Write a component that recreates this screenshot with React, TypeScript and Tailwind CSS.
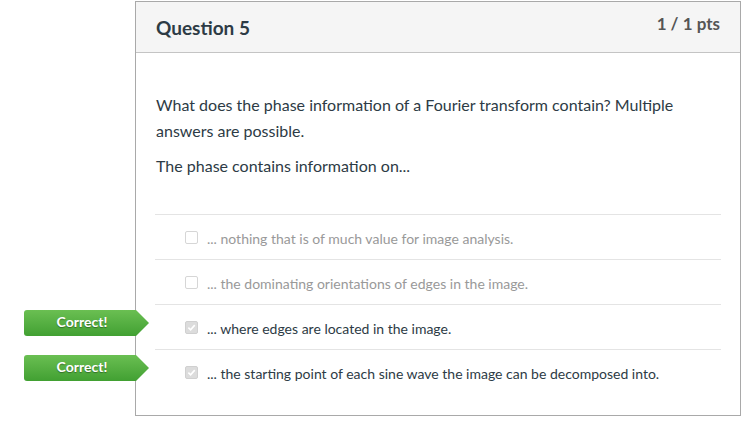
import React from "react";

const answers = [
  { text: "... nothing that is of much value for image analysis.", checked: false },
  { text: "... the dominating orientations of edges in the image.", checked: false },
  { text: "... where edges are located in the image.", checked: true },
  { text: "... the starting point of each sine wave the image can be decomposed into.", checked: true },
];

function Badge() {
  return (
    <div className="absolute left-[-131px] top-[5px] h-[26px] w-[125px] rounded-l-[3px] bg-gradient-to-b from-[#6abf52] to-[#41a032] [clip-path:polygon(0_0,112px_0,125px_50%,112px_100%,0_100%)] flex items-center">
      <span className="w-[116px] text-center text-[14px] font-bold text-white [text-shadow:0_1px_1px_rgba(0,0,0,0.35)] leading-none pb-[2px]">
        Correct!
      </span>
    </div>
  );
}

function Check({ checked }: { checked: boolean }) {
  return (
    <div
      className={
        "w-[13px] h-[13px] rounded-[2px] border flex items-center justify-center " +
        (checked ? "bg-[#dcdcdc] border-[#d0d0d0]" : "bg-white border-[#d6d6d6]")
      }
    >
      {checked && (
        <svg width="9" height="9" viewBox="0 0 10 10">
          <path d="M1.5 5.2 L4 7.6 L8.6 2.4" fill="none" stroke="#fff" strokeWidth="1.8" />
        </svg>
      )}
    </div>
  );
}

export default function App() {
  return (
    <div className="w-[750px] h-[435px] bg-white pt-px pl-[135px] font-['Lato','Liberation_Sans',sans-serif]">
      <div className="w-[606px] border border-[#a9a9a9]">
        <div className="h-[51px] bg-[#f5f5f5] border-b border-[#c4c4c4] px-5 flex justify-between items-start">
          <div className="pt-[14px] text-[19px] font-bold text-[#2d3b45] leading-[24px]">Question 5</div>
          <div className="pt-[11px] text-[17px] font-bold text-[#555] leading-[22px]">1 / 1 pts</div>
        </div>
        <div className="px-5 pt-[39px] pb-[21px]">
          <p className="text-[16px] leading-[26px] text-[#2d3b45]">
            What does the phase information of a Fourier transform contain? Multiple answers are possible.
          </p>
          <p className="mt-[9px] text-[16px] leading-[26px] text-[#2d3b45]">The phase contains information on...</p>
          <div className="mt-[35px]">
            {answers.map((a, i) => (
              <div
                key={i}
                className="relative h-[45px] border-t border-[#e4e4e4] flex items-center pl-[30px] gap-[9px] -mx-px"
              >
                {a.checked && <Badge />}
                <Check checked={a.checked} />
                <span className={"text-[14px] pt-[2px] " + (a.checked ? "text-[#2d3b45]" : "text-[#999]")}>
                  {a.text}
                </span>
              </div>
            ))}
          </div>
        </div>
      </div>
    </div>
  );
}
